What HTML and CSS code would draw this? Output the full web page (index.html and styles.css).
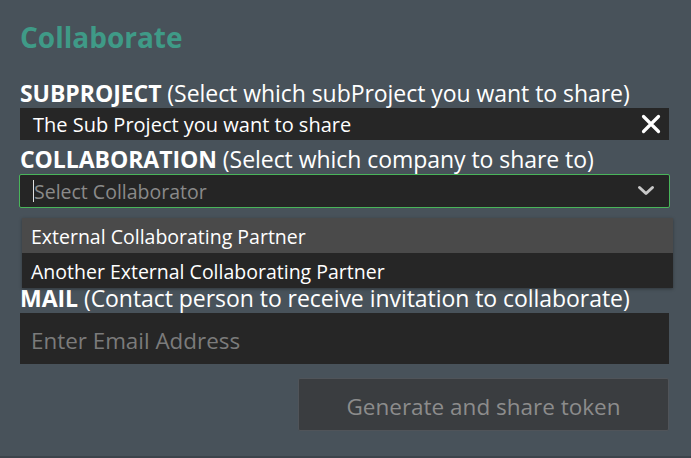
FILE: index.html
```html
<!DOCTYPE html>
<html>
<head>
<meta charset="utf-8">
<link rel="stylesheet" href="styles.css">
</head>
<body>
<div class="panel">
  <h1 class="title">Collaborate</h1>
  <div class="label label1"><b>SUBPROJECT</b> (Select which subProject you want to share)</div>
  <div class="chip">
    <span class="chip-text">The Sub Project you want to share</span>
    <svg class="close" width="20" height="20" viewBox="0 0 20 20"><path d="M2.5 2.5L17.5 17.5M17.5 2.5L2.5 17.5" stroke="#ffffff" stroke-width="3.2" stroke-linecap="round"/></svg>
  </div>
  <div class="label label2"><b>COLLABORATION</b> (Select which company to share to)</div>
  <div class="select-wrap">
    <div class="select">
      <span class="caret"></span><span class="placeholder">Select Collaborator</span>
      <svg class="chev" width="18" height="12" viewBox="0 0 18 12"><path d="M2.5 2.5L9 8.5L15.5 2.5" stroke="#c8c8c8" stroke-width="3" fill="none" stroke-linecap="round" stroke-linejoin="round"/></svg>
    </div>
    <div class="menu">
      <div class="opt hover">External Collaborating Partner</div>
      <div class="opt">Another External Collaborating Partner</div>
    </div>
  </div>
  <div class="label label3"><b>MAIL</b> (Contact person to receive invitation to collaborate)</div>
  <div class="email">Enter Email Address</div>
  <div class="actions">
    <div class="btn">Generate and share token</div>
  </div>
</div>
<div class="bottom"></div>
</body>
</html>
```
FILE: styles.css
```css
html, body {
  margin: 0;
  padding: 0;
  background: #48525a;
  height: 458px;
  overflow: hidden;
}
body {
  font-family: "Open Sans", "Noto Sans", sans-serif;
  color: #ffffff;
  position: relative;
}
.panel {
  width: 649px;
  padding: 18px 0 0 20px;
}
.title {
  margin: 0;
  font-size: 28px;
  font-weight: 700;
  color: #3f9a87;
  line-height: 38px;
}
.label {
  font-size: 23px;
  line-height: 26px;
  white-space: nowrap;
  letter-spacing: -0.05px;
}
.label b { font-weight: 700; }
.label1 { margin-top: 24px; margin-bottom: 2px; }
.label2 { margin-top: 6px; margin-bottom: 2px; }
.label3 { margin-top: 77px; margin-bottom: 2px; }
.chip {
  height: 32px;
  background: #262626;
  display: flex;
  align-items: center;
  justify-content: space-between;
  padding: 0 8px 0 13px;
}
.chip-text {
  font-size: 20px;
}
.select-wrap { position: relative; }
.select {
  margin-left: -1px;
  margin-right: -1px;
  height: 32px;
  border: 1px solid #49b55a;
  border-radius: 2px;
  background: #252525;
  display: flex;
  align-items: center;
  padding: 0 14px 0 13px;
}
.caret {
  width: 1px;
  height: 22px;
  background: #e0e0e0;
}
.placeholder {
  flex: 1;
  color: #8a8a8a;
  font-size: 19.5px;
}
.menu {
  position: absolute;
  left: 2px;
  top: 44px;
  width: 651px;
  box-shadow: 0 1px 3px rgba(0,0,0,0.35);
  z-index: 2;
}
.opt {
  height: 35px;
  line-height: 37px;
  padding-left: 9px;
  background: #262626;
  font-size: 19.5px;
}
.opt.hover { background: #4a4a4a; }
.email {
  height: 51px;
  line-height: 55px;
  background: #262626;
  color: #7b7b7b;
  font-size: 22.4px;
  padding-left: 11px;
  overflow: hidden;
}
.actions {
  display: flex;
  justify-content: flex-end;
  margin-top: 14px;
}
.btn {
  width: 369px;
  height: 51px;
  line-height: 55px;
  border: 1px solid #505459;
  background: #3a3d40;
  border-radius: 2px;
  color: #8c8c8c;
  font-size: 22.5px;
  text-align: center;
  overflow: hidden;
}
.bottom {
  position: absolute;
  left: 0;
  right: 0;
  bottom: 0;
  height: 2px;
  background: #3c444b;
}
```
